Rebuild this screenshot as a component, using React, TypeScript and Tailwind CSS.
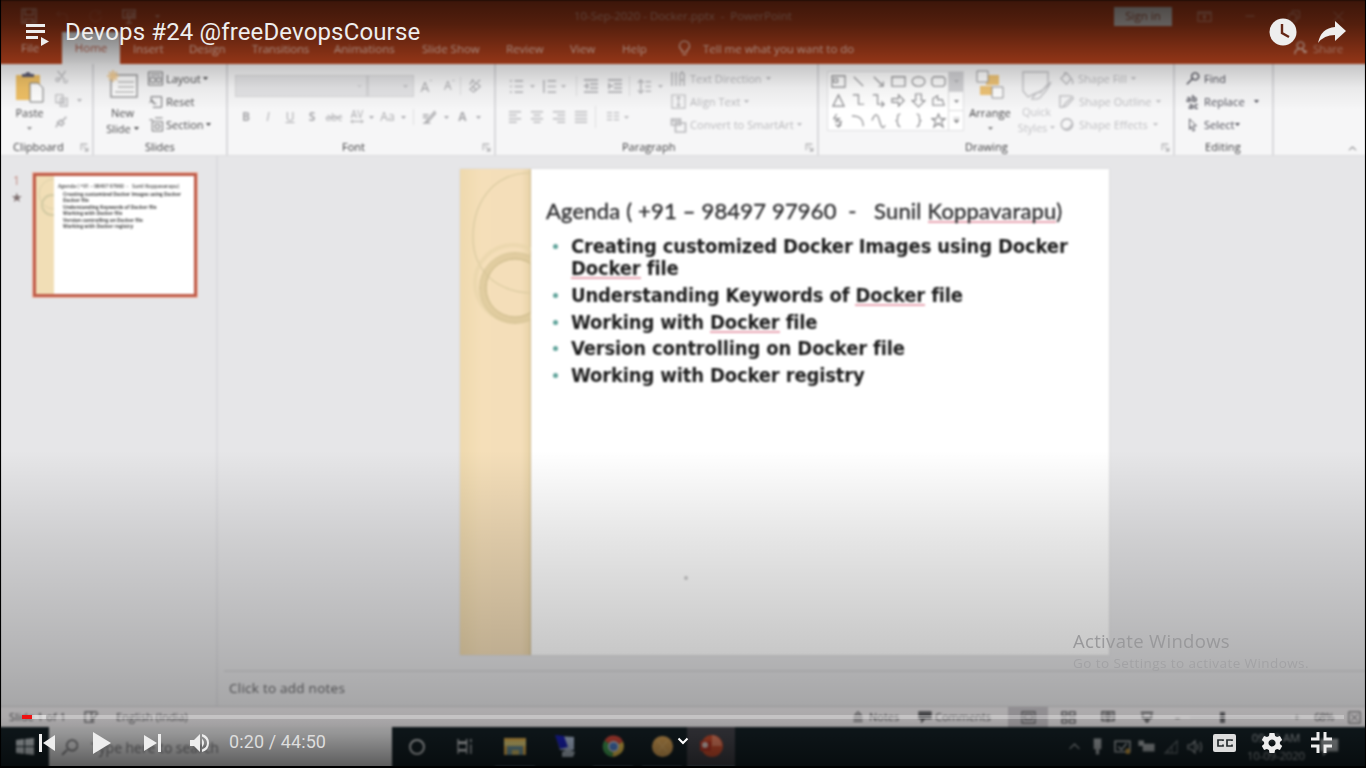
import React from "react";

type Kids = { className?: string; children?: React.ReactNode };

function Cell({ className = "w-[22px]", children }: Kids) {
  return <span className={`flex shrink-0 items-center justify-center ${className}`}>{children}</span>;
}

function Ico({ className = "size-4", d, fill = "none", sw = 1.2, box = "0 0 16 16" }: { className?: string; d: string; fill?: string; sw?: number; box?: string }) {
  return (
    <svg className={`shrink-0 ${className}`} viewBox={box} fill={fill} stroke="currentColor" strokeWidth={sw}>
      <path d={d} />
    </svg>
  );
}

function Caret({ className = "" }: { className?: string }) {
  return (
    <svg className={`h-[3px] w-[5px] shrink-0 ${className}`} viewBox="0 0 5 3">
      <path d="M0 0h5L2.5 3z" fill="currentColor" />
    </svg>
  );
}

function Group({ className = "", label, launcher, labelClass = "", children }: Kids & { label: string; launcher?: boolean; labelClass?: string }) {
  return (
    <section className={`flex shrink-0 flex-col border-r-2 border-[#d9d9db] ${className}`}>
      <div className="flex h-[71px]">{children}</div>
      <div className="relative h-[20px] text-[11px] leading-[24px] font-medium text-[#3c3c3e]">
        <span className={`block whitespace-nowrap ${labelClass}`}>{label}</span>
        {launcher && <Ico className="absolute top-[8px] right-[3px] size-[9px] text-[#a8a8aa]" d="M2 13V2h11M6 6l8 8M14 8v6H8" sw={1.8} />}
      </div>
    </section>
  );
}

const tabs: [string, string, string][] = [
  ["Insert", "ml-[13px] w-[56px]", "tracking-[-0.1px]"],
  ["Design", "w-[63px]", ""],
  ["Transitions", "w-[82px]", "tracking-[-0.2px]"],
  ["Animations", "w-[88px]", ""],
  ["Slide Show", "w-[84px]", ""],
  ["Review", "w-[64px]", ""],
  ["View", "w-[52px]", ""],
  ["Help", "w-[54px]", ""],
];

function TitleBar() {
  return (
    <header className="h-[64px] shrink-0 bg-[#b8431d] text-[11.5px] text-[#f3c9b9]">
      <div className="flex h-[32px] items-center pl-[21px]">
        <div className="flex w-[553px] items-center gap-[18px] opacity-60">
          <Ico d="M1 1h14v14H1zM4 1v6h8V1M4 15v-4h8v4" sw={1.6} />
          <Ico className="size-[15px] opacity-30" d="M2 5h8q4 1 3 8M5 2L2 5l3 3" />
          <Ico className="size-[15px] opacity-30" d="M12 3a6 6 0 1 0 2 5M13 1v4H9" />
          <Ico d="M1 2h14M2 2v8h12V2M8 10v5M5 15h6M6 5h6v3H6z" sw={1.6} />
          <Caret />
        </div>
        <span className="w-[540px] tracking-[-0.03px] whitespace-pre opacity-70">10-Sep-2020 - Docker.pptx  -  PowerPoint</span>
        <span className="flex h-[19px] w-[58px] items-center justify-center bg-[#d9cfc9] text-[11.5px] text-[#98503a]">Sign in</span>
        <div className="ml-[25px] flex items-center gap-[31px] opacity-60">
          <Ico className="size-[15px]" d="M1 3h14v10H1zM1 5h14M8 12V7M6 9l2-2 2 2" />
          <Ico className="size-[14px]" d="M3 8h10" />
          <Ico className="size-[13px]" d="M1 5h9v9H1zM5 5V1h9v9h-4" />
          <Ico className="size-[13px]" d="M2 2l12 12M14 2L2 14" />
        </div>
      </div>
      <nav className="flex h-[32px] items-center whitespace-nowrap">
        <span className="w-[62px] pl-[21px]">File</span>
        <span className="flex h-[32px] w-[58px] items-center justify-center bg-[#f3f3f4] text-[#c0604a]">Home</span>
        {tabs.map(([t, w, k]) => (
          <span key={t} className={`shrink-0 pt-px ${w} ${k}`}>{t}</span>
        ))}
        <Ico className="ml-[2px] h-[17px] w-[13px]" box="0 0 13 17" d="M4 12V10Q1 8 1.500 5.500Q2.500 1 6.500 1Q11 1.500 11.500 5.500Q12 8 9 10v2zM4.500 14.500h4" />
        <span className="ml-[12px] w-[591px] pt-px">Tell me what you want to do</span>
        <Ico className="size-[14px]" d="M7 1a4 4 0 1 0 1 0zM1 15q0-6 6-6 5 0 6 5M10 12h5" sw={1.5} />
        <span className="ml-[5px] pt-px tracking-[-0.2px] opacity-70">Share</span>
      </nav>
    </header>
  );
}

const shapes = [
  "M1 2h14v12H1zM3 5h4v4H3z", "M3 3l10 10", "M3 3l9 9M13 8v5H8", "M1 3h14v10H1z", "M8 3c9 0 9 10 0 10S-1 3 8 3z", "M3 3h10l2 2v6l-2 2H3l-2-2V5z",
  "M8 2l6 12H2z", "M2 2h6v10h6", "M2 2h5v10h6M11 9l3 3-3 3", "M1 6h7V2l6 6-6 6v-4H1z", "M5 1h6v7h4l-7 7-7-7h4z", "M2 13V6l5-3v4h5l2 6z",
  "M6 1L3 6h6L5 9h6l-3 5M5 12l3 3 3-3", "M1 3q12 0 12 11", "M1 8q5-12 8 0t6 5", "M10 1Q7 1 7 5T5 8q2 0 2 3t3 4", "M6 1q3 0 3 4t2 3q-2 0-2 3t-3 4", "M8 1l2 5h5l-4 3 2 6-5-4-5 4 2-6-4-3h5z",
];

function Ribbon() {
  return (
    <div className="flex h-[92px] shrink-0 border-b border-[#dcdcde] bg-[#f6f6f7] text-[11px] font-medium text-[#4a4a4c]">
      <Group className="w-[94px]" label="Clipboard" launcher labelClass="pl-[13px] tracking-[0.1px]">
        <div className="flex w-[42px] flex-col items-center pt-[7px] pl-[17px] whitespace-nowrap">
          <svg className="h-[32px] w-[30px] shrink-0" viewBox="0 0 30 32">
            <path d="M1 4h24v25H1z" fill="#efc065" />
            <path d="M7 6V3h3q3-4 6 0h3v3z" fill="#5a5a70" />
            <path d="M15 12h8l5 5v14H15z" fill="#fff" stroke="#777" />
          </svg>
          <span className="leading-[20px]">Paste</span>
          <Caret className="mt-[4px] opacity-60" />
        </div>
        <div className="ml-[13px] flex w-[34px] flex-col items-start gap-[9px] pt-[6px] text-[#b2b2b5]">
          <Ico className="size-[14px]" d="M3 1l8 10M12 1L5 11M5 11a2 2 0 1 0 0 .1M11 11a2 2 0 1 0 2 0" />
          <span className="flex items-center gap-[8px]"><Ico className="size-[14px]" d="M1 2h8v9H1zM6 6h8v9H6zM8 9h4M8 12h4" /><Caret /></span>
          <Ico className="size-[13px]" d="M14 1L9 6M7 5l4 4-3 3-5-4zM4 9l-3 5" sw={2} />
        </div>
      </Group>
      <Group className="w-[134px]" label="Slides" labelClass="pl-[51px]">
        <div className="flex w-[53px] flex-col items-center pt-[6px] pl-[4px]">
          <svg className="h-[30px] w-[32px] shrink-0" viewBox="0 0 32 30">
            <path d="M4 5h26v22H4z" fill="#fff" stroke="#9a9a9c" strokeWidth="1.500" />
            <path d="M11 12h16M11 17h16M8 22h19" stroke="#bbb" strokeWidth="1.500" />
            <path d="M6 0v12M0 6h12M2 2l8 8M10 2l-8 8" stroke="#f4d09a" strokeWidth="2" />
          </svg>
          <span className="mt-[5px] leading-[16px]">New</span>
          <span className="flex items-center gap-[3px] leading-[15px]">Slide<Caret /></span>
        </div>
        <div className="flex flex-col pt-[3px] leading-[23px] whitespace-nowrap">
          <span className="flex items-center gap-[2px]"><Ico className="h-[15px] w-[17px]" box="0 0 17 16" d="M1 1h15v14H1zM3 4h11M3 7h5v5H3zM10 7h4v5h-4z" sw={0.8} />Layout<Caret /></span>
          <span className="flex items-center gap-[2px]"><Ico className="h-[14px] w-[17px]" d="M3 7V2h12v12H5M1 9l3-3 3 3M4 6q0 5 5 4" sw={0.9} />Reset</span>
          <span className="flex items-center gap-[2px] pl-[1px]"><Ico className="h-[15px] w-[16px]" d="M4 5h11v10H4zM7 1h8M1 3h4M7 8h5v4H7z" sw={0.8} />Section<Caret /></span>
        </div>
      </Group>
      <Group className="w-[268px]" label="Font" launcher labelClass="pl-[114px]">
        <div className="flex flex-col pl-[7px] text-[#aaaaad]">
          <div className="flex h-[44px] items-center">
            <span className="flex h-[22px] w-[132px] items-center justify-end border border-[#d6d6d8] bg-[#e5e5e7] pr-1"><Caret className="opacity-30" /></span>
            <span className="flex h-[22px] w-[47px] items-center justify-end border border-l-2 border-[#d6d6d8] bg-[#e5e5e7] pr-[5px]"><Caret className="opacity-60" /></span>
            <Cell className="w-[25px] text-[14px]">A<sup className="text-[8px]">ˆ</sup></Cell>
            <Cell className="w-[22px] border-r border-[#dddddf] text-[12px]">A<sup className="text-[8px]">ˇ</sup></Cell>
            <Cell className="w-[28px]"><Ico className="size-[15px]" d="M2 11L9 4l4 4-7 6zM5 8l4 4M2 6l3-5 2 3M10 3l3-2" /></Cell>
          </div>
          <div className="flex h-[18px] items-center text-[12px]">
            <Cell><b>B</b></Cell><Cell><i>I</i></Cell><Cell><u>U</u></Cell><Cell><b>S</b></Cell>
            <Cell><s className="text-[10px]">abc</s></Cell>
            <Cell className="w-[24px] flex-col text-[10px] leading-[9px]"><span>AV</span><Ico className="h-[5px] w-[14px]" box="0 0 14 5" d="M1 2.500h12M3 .5l-2 2 2 2M11 .5l2 2-2 2" sw={1} /></Cell>
            <Caret /><Cell className="w-[27px]">Aa</Cell><Caret />
            <span className="ml-[7px] h-[16px] w-px bg-[#dddddf]" />
            <Cell className="w-[30px]"><Ico className="size-[15px]" d="M1 5h6M1 8h5M14 1L6 10l-3 4 4-2 8-9M1 14h8" sw={1.5} /></Cell>
            <Caret /><Cell className="w-[27px] font-bold">A</Cell><Caret />
          </div>
        </div>
      </Group>
      <Group className="w-[323px]" label="Paragraph" launcher labelClass="pl-[126px]">
        <div className="flex w-[174px] flex-col pl-[8px] text-[#bbbbbe]">
          <div className="flex h-[44px] items-center">
            <Cell className="w-[24px]"><Ico className="size-[15px]" d="M1 2h2M1 8h2M1 14h2M6 2h9M6 8h9M6 14h9" sw={1.8} /></Cell><Caret className="ml-[2px]" />
            <Cell className="ml-[2px] w-[24px]"><Ico className="size-[15px]" d="M2 1v14M6 2h9M6 8h9M6 14h9" sw={1.8} /></Cell><Caret />
            <span className="ml-[10px] h-[20px] w-px bg-[#dddddf]" />
            <Cell className="ml-[2px] w-[24px]"><Ico d="M1 2h14M7 6h8M7 10h8M1 14h14M1 8h5M4 5v6" sw={2} /></Cell>
            <Cell className="w-[23px]"><Ico d="M1 2h14M7 6h8M7 10h8M1 14h14M1 8h5M2 5v6" sw={2} /></Cell>
            <span className="ml-[3px] h-[20px] w-px bg-[#dddddf]" />
            <Cell className="w-[28px]"><Ico className="size-[15px]" d="M4 1v14M1 4l3-3 3 3M1 12l3 3 3-3M9 3h6M9 8h6M9 13h6" sw={1.6} /></Cell><Caret />
          </div>
          <div className="flex h-[18px] items-center">
            <Cell><Ico className="size-[14px]" d="M1 2h14M1 6h9M1 10h14M1 14h9" sw={1.7} /></Cell>
            <Cell><Ico className="size-[14px]" d="M1 2h14M4 6h8M1 10h14M4 14h8" sw={1.7} /></Cell>
            <Cell><Ico className="size-[14px]" d="M1 2h14M6 6h9M1 10h14M6 14h9" sw={1.7} /></Cell>
            <Cell><Ico className="size-[14px]" d="M1 2h14M1 6h14M1 10h14M1 14h14" sw={1.7} /></Cell>
            <span className="ml-[3px] h-[22px] w-px bg-[#dddddf]" />
            <Cell className="ml-[5px] w-[23px]"><Ico className="size-[14px]" d="M1 3h6M1 7h6M1 11h6M9 3h6M9 7h6M9 11h6" sw={1.7} /></Cell><Caret />
          </div>
        </div>
        <div className="flex flex-col pt-[3px] leading-[23px] whitespace-nowrap text-[#b9b9bc]">
          <span className="flex items-center gap-[4px]"><Ico className="size-[16px]" d="M2 1v14M6 1v14M10 15V3l2-2 2 2v12M10 9h4" sw={1.5} />Text Direction<Caret /></span>
          <span className="flex items-center gap-[3px] tracking-[0.05px]"><Ico className="h-[15px] w-[17px]" d="M1 1h14v14H1zM8 3v10M6 5l2-2 2 2M6 11l2 2 2-2" />Align Text<Caret /></span>
          <span className="flex items-center gap-[3px] tracking-[0.05px]"><Ico className="h-[16px] w-[17px]" d="M1 2h9v6H1zM5 6h10v9H5zM1 4h9" sw={1.7} />Convert to SmartArt<Caret /></span>
        </div>
      </Group>
      <Group className="w-[356px]" label="Drawing" launcher labelClass="pl-[146px]">
        <div className="mt-[7px] ml-[8px] flex h-[60px] w-[137px] border border-[#e0e0e2] bg-white text-[#88888b]">
          <div className="grid w-[121px] grid-cols-6 grid-rows-3 place-items-center">
            {shapes.map((d, i) => <Ico key={i} className="size-[15px]" d={d} sw={1.2} />)}
          </div>
          <div className="flex w-[15px] flex-col border-l border-[#dadadc]">
            <span className="flex flex-1 items-center justify-center bg-[#d2d2d5]"><Caret className="opacity-40" /></span>
            <span className="flex flex-1 items-center justify-center border-y border-[#dadadc]"><Caret /></span>
            <span className="flex flex-1 items-center justify-center"><Ico className="size-[7px]" d="M1 2h14M2 7h12l-6 7z" fill="currentColor" /></span>
          </div>
        </div>
        <div className="flex w-[52px] flex-col items-center pt-[6px]">
          <svg className="h-[30px] w-[28px] shrink-0" viewBox="0 0 28 30">
            <path d="M10 5h13v10H10zM4 16h12v9H4z" fill="#efc476" />
            <path d="M1 1h11v11H1zM16 17h11v11H16z" fill="#fff" stroke="#959598" />
          </svg>
          <span className="mt-[4px] leading-[18px] tracking-[0.1px] text-[#3f3f41]">Arrange</span>
          <Caret className="mt-[5px] opacity-70" />
        </div>
        <div className="flex w-[41px] flex-col items-center pt-[7px] text-[#c2c2c5]">
          <Ico className="h-[30px] w-[30px]" box="0 0 30 30" d="M1 1h25v12l-7 8-5 1-8 4-5-6zM29 11q-7 8-12 10-4 1-7 7 8 1 10-4 4-3 9-13z" sw={1.4} />
          <span className="mt-[3px] leading-[16px]">Quick</span>
          <span className="flex items-center gap-[3px] leading-[15px]">Styles<Caret /></span>
        </div>
        <div className="ml-[2px] flex flex-col pt-[3px] leading-[23px] whitespace-nowrap text-[#bebec1]">
          <span className="flex items-center gap-[4px]"><Ico className="size-[15px]" d="M2 8l6-6 5 6-5 6zM6 5V1M13 8q3 4 1 6" sw={1.5} />Shape Fill<Caret /></span>
          <span className="flex items-center gap-[5px]"><Ico className="size-[15px]" d="M13 2H1v12h3M15 2L6 11l-2 3 4-1 8-9" sw={1.5} />Shape Outline<Caret /></span>
          <span className="flex items-center gap-[5px]"><Ico className="size-[15px]" d="M8 2a6 6 0 1 0 1 0zM4 12q7 3 10-5" sw={1.8} />Shape Effects<Caret /></span>
        </div>
      </Group>
      <Group className="w-[99px]" label="Editing" labelClass="pl-[30px] tracking-[0.1px]">
        <div className="flex flex-col pt-[3px] pl-[11px] leading-[23px] whitespace-nowrap text-[#4b4b55]">
          <span className="flex items-center gap-[4px]"><Ico className="size-[14px]" d="M10 1a4 4 0 1 0 1 0zM7 8l-6 6" sw={1.5} />Find</span>
          <span className="flex items-center gap-[4px]"><span className="w-[14px] text-[9px] leading-[7px] font-bold">ab<br />&nbsp;ac</span><span className="tracking-[0.1px]">Replace</span><Caret className="ml-[5px]" /></span>
          <span className="flex items-center gap-[4px]"><Ico className="size-[14px]" d="M4 1l8 8H8l2 5-2 1-2-5-2 3z" sw={1} />Select<Caret className="-ml-[3px]" /></span>
        </div>
      </Group>
      <div className="flex flex-1 items-end justify-end pr-[9px] pb-[2px]"><Ico className="size-[9px]" d="M2 11l6-6 6 6" sw={1.6} /></div>
    </div>
  );
}

function Typo({ children }: Kids) {
  return <span className="bg-[linear-gradient(#e9a6b3,#e9a6b3)] bg-[length:100%_2px] bg-[position:0_94%] bg-no-repeat">{children}</span>;
}

function Thumbnail() {
  return (
    <div className="flex h-[124px] w-[164px] overflow-hidden border-[3px] border-[#bf5b48] bg-white outline outline-[#f3c2b2]">
      <div className="w-[18px] shrink-0 overflow-hidden bg-[#f1deb6]">
        <svg className="h-[50px] w-[18px]" viewBox="0 0 18 50" fill="none" stroke="#d3caa3"><circle cx="18" cy="18" r="15" strokeWidth=".7" /><circle cx="16" cy="29" r="10" strokeWidth="2" /></svg>
      </div>
      <div className="flex flex-col pt-[7px] pl-[4px] text-[5px] font-bold whitespace-pre text-[#444]">
        <span className="mb-[2px] leading-[7px] font-semibold">Agenda ( +91 – 98497 97960  -   Sunil Koppavarapu)</span>
        <ul className="pl-[5px] text-[4.800px] leading-[6.400px]">
          <li className="leading-[5.500px]">Creating customized Docker Images using Docker<br />Docker file</li>
          <li className="pt-px">Understanding Keywords of Docker file</li>
          <li>Working with Docker file</li>
          <li>Version controlling on Docker file</li>
          <li>Working with Docker registry</li>
        </ul>
      </div>
    </div>
  );
}

function Bullet({ className = "", children }: Kids) {
  return (
    <li className={`flex ${className}`}>
      <span className="mt-[9px] mr-[13px] size-[5px] shrink-0 rounded-full bg-[#5fa39a]" />
      <span>{children}</span>
    </li>
  );
}

function Slide() {
  return (
    <div className="mt-[13px] ml-[242px] flex h-[486px] w-[649px] bg-white shadow-[0_0_2px_#cfcfd2]">
      <div className="w-[71px] shrink-0 border-r border-[#cdbb91] bg-[linear-gradient(90deg,#eed9ae,#f5dfb9_30%,#f4deb9_88%,#e8d3a8)]">
        <svg className="h-[170px] w-[71px]" viewBox="0 0 71 170" fill="none">
          <path d="M70 4C32 4 13 35 13 68s22 54 57 56" stroke="#d9caa0" strokeWidth="1.200" />
          <circle cx="53" cy="114" r="38" stroke="#e6d4a9" strokeWidth="4" opacity=".6" />
          <circle cx="55" cy="119" r="32" stroke="#d8c496" strokeWidth="6" opacity=".7" />
          <circle cx="55" cy="119" r="29" stroke="#c9b888" strokeWidth="1" />
          <circle cx="55" cy="119" r="35.500" stroke="#cfbf90" strokeWidth="1" opacity=".8" />
        </svg>
      </div>
      <div className="flex flex-1 flex-col pt-[27px] pl-[15px] text-[#1c1c1c]">
        <h1 className="h-[39px] font-['Lato'] text-[22px] leading-[30px] tracking-[0.18px] whitespace-pre text-[#2c2c2e] [-webkit-text-stroke:0.35px_#2c2c2e]">Agenda ( +91 – 98497 97960  -   Sunil <Typo>Koppavarapu</Typo>)</h1>
        <ul className="flex flex-col pl-[7px] font-['DejaVu_Sans_Condensed','DejaVu_Sans'] text-[20px] leading-[22px] font-bold tracking-[-0.15px] whitespace-nowrap [font-stretch:condensed]">
          <Bullet className="h-[49px]">Creating customized Docker Images using Docker<br /><Typo>Docker</Typo> file</Bullet>
          <Bullet className="h-[27px]">Understanding Keywords of <Typo>Docker</Typo> file</Bullet>
          <Bullet className="h-[26px]">Working with <Typo>Docker</Typo> file</Bullet>
          <Bullet className="h-[27px]">Version controlling on Docker file</Bullet>
          <Bullet className="h-[27px]">Working with Docker registry</Bullet>
        </ul>
        <span className="mt-[185px] ml-[138px] size-[4px] rounded-full bg-[#c9c9cb]" />
      </div>
    </div>
  );
}

function StatusBar() {
  return (
    <div className="flex h-[21px] shrink-0 items-center border-t border-[#cfcfd2] bg-[#f1eef0] pl-[9px] text-[11px] whitespace-nowrap text-[#626265]">
      <span className="w-[75px] tracking-[0.1px]">Slide 1 of 1</span>
      <span className="w-[32px]"><Ico className="size-[15px]" d="M1 2h7v11H1zM8 2h6M8 13h3M10 9l5-6M10 9v3" /></span>
      <span className="w-[736px] tracking-[0.05px]">English (India)</span>
      <span className="flex w-[66px] items-center gap-[5px]"><Ico className="size-[12px]" d="M4 5l4-4 4 4zM2 8h12M2 11h12M2 14h12" sw={1.4} />Notes</span>
      <span className="flex w-[90px] items-center gap-[3px]"><Ico className="size-[14px]" fill="currentColor" d="M1 2h14v8H8l-4 4v-4H1z" />Comments</span>
      <span className="flex h-full w-[40px] items-center justify-center bg-[#cac6cb]"><Ico className="size-[15px]" d="M1 2h14v12H1zM4 5h8v5H4z" /></span>
      <Cell className="w-[40px]"><Ico className="size-[15px]" d="M1 2h5v4H1zM9 2h6v4H9zM1 10h5v4H1zM9 10h6v4H9z" sw={1.4} /></Cell>
      <Cell className="w-[39px]"><Ico className="size-[14px]" d="M1 2h14v10H1zM8 2v12M3 5h4M9 5h4M3 8h4M9 8h4" sw={1.5} /></Cell>
      <Cell className="w-[40px]"><Ico className="size-[14px]" d="M1 3h14M3 5v4h10V5M8 9v5M5 11l3 3 3-3" sw={1.8} /></Cell>
      <Cell className="w-[21px]">–</Cell>
      <span className="ml-[2px] flex h-px w-[102px] items-center bg-[#cfcdd2] pl-[30px]"><span className="h-[11px] w-[5px] bg-[#6d6d71]" /></span>
      <Cell className="w-[10px]">+</Cell>
      <span className="ml-[12px] w-[34px] tracking-[-0.7px]">68%</span>
      <Ico className="size-[13px]" d="M1 1h14v14H1zM4 4l8 8M12 4l-8 8" />
    </div>
  );
}

function TaskBar() {
  return (
    <div className="flex h-[41px] shrink-0 bg-[#142025] text-[#d3d6d9]">
      <Cell className="w-[49px] pb-[3px]"><svg className="size-[18px]" viewBox="0 0 18 18" fill="#c2c9cd"><path d="M0 3l8-1v7H0zM9 2l9-1v8H9zM0 10h8v7l-8-1zM9 10h9v8l-9-1z" /></svg></Cell>
      <div className="flex w-[343px] items-center bg-[#eaeaeb] pb-px pl-[12px] text-[14px] tracking-[-0.05px] text-[#77777a]">
        <Ico className="mr-[13px] size-[17px]" d="M10 1a5 5 0 1 0 1 0zM6 10l-5 5" sw={1.6} />
        Type here to search
      </div>
      <Cell className="w-[50px] pb-[2px]"><span className="size-[16px] rounded-full border-[2.5px] border-[#c4c8ca]" /></Cell>
      <Cell className="w-[45px] pb-[3px]"><Ico className="size-[17px]" d="M2 1v3h8V1M2 5h8v6H2zM2 15v-3h8v3M14 1v3M14 6v9" sw={1.2} /></Cell>
      <div className="flex [&>span]:border-b-2 [&>span]:pb-[1px]">
        <Cell className="ml-[8px] w-[40px] border-[#5b7387]"><svg className="h-[20px] w-[23px]" viewBox="0 0 23 20"><path d="M0 2h22v17H0z" fill="#e7b550" /><path d="M0 5h22v5H0z" fill="#e5d37c" /><path d="M3 10h16v9H3z" fill="#71979f" /><path d="M8 14h7v5H8z" fill="#d2bd6a" /></svg></Cell>
        <Cell className="ml-[8px] w-[44px] border-transparent"><svg className="size-[24px]" viewBox="0 0 24 24"><path d="M3 2l18 1v13H7z" fill="#b4c5df" /><path d="M2 1l9 1 4 11-8 2z" fill="#1b23bd" /><path d="M9 18l6-3 7 3-2 5H9z" fill="#aab7c2" /></svg></Cell>
        <Cell className="ml-[6px] w-[40px] border-[#5b7387]"><svg className="size-[23px]" viewBox="0 0 24 24"><path d="M12 12L2.500 6A11 11 0 0 1 22 7z" fill="#d94b3c" /><path d="M12 12l-1 11A11 11 0 0 1 2.500 6z" fill="#43a154" /><path d="M12 12l10-5q4 13-11 16z" fill="#edc54e" /><circle cx="12" cy="12" r="5" fill="#4f84d3" stroke="#d8d9dd" strokeWidth="1.500" /></svg></Cell>
        <Cell className="ml-[9px] w-[40px] border-[#5b7387]"><svg className="size-[23px]" viewBox="0 0 24 24"><circle cx="12" cy="12" r="11" fill="#dda657" /><path d="M7 6l10 12M17 6L7 18" stroke="#efc27c" /></svg></Cell>
        <Cell className="ml-[5px] w-[48px] border-[#6d8497] bg-[#43434a]"><svg className="size-[24px]" viewBox="0 0 24 24"><circle cx="13" cy="12" r="11" fill="#d45130" /><path d="M13 1a11 11 0 0 1 10 11H13z" fill="#ee8464" /><path d="M1 7h11v10H1z" fill="#bd3927" /><circle cx="6" cy="11" r="3" fill="#e9d4ce" /></svg></Cell>
      </div>
      <div className="ml-[329px] flex items-center pb-[2px] text-[#a3a9ac]">
        <Cell className="w-[20px]"><Ico className="size-[13px]" d="M2 11l6-6 6 6" sw={1.5} /></Cell>
        <Cell className="w-[26px]"><Ico className="size-[17px]" fill="currentColor" d="M5 1h6v9H5zM7 10v5h2v-5" /></Cell>
        <Cell className="w-[24px]"><svg className="size-[17px]" viewBox="0 0 16 16"><path d="M1 3h14v10H1zM4 8l3 3 5-6" fill="none" stroke="currentColor" strokeWidth="1.500" /><path d="M11 10h4v5h-4z" fill="#c79a3e" /></svg></Cell>
        <Cell className="w-[25px]"><Ico className="size-[17px]" fill="currentColor" d="M5 6h10v6H5zM1 3h4v4H1z" /></Cell>
        <Cell className="w-[24px]"><Ico className="size-[14px] opacity-60" d="M1 15L15 1v14zM5 15v-4M9 15V7" /></Cell>
        <Cell className="w-[23px]"><Ico d="M1 6h3l4-4v12l-4-4H1zM10 5q2 3 0 6M13 3q3 5 0 10" /></Cell>
        <span className="ml-[39px] flex w-[62px] flex-col items-center text-[11.500px] leading-[18px] tracking-[-0.2px]"><span>09:12 AM</span><span>10-09-2020</span></span>
        <Cell className="w-[34px] pl-[12px]"><Ico className="size-[20px]" fill="currentColor" d="M1 2h13v9H6l-3 3v-3H1z" /></Cell>
      </div>
    </div>
  );
}

function Player() {
  return (
    <div className="absolute inset-0 flex flex-col justify-between font-['Roboto',sans-serif] text-[#eeeeee]">
      <div className="flex h-[64px] items-center pl-[25px]">
        <svg className="mt-[5px] h-[24px] w-[25px]" viewBox="0 0 25 24" fill="currentColor"><path d="M1 1h19v3H1zM1 7h19v3H1zM1 13h12v3H1zM16 14l8 4.500-8 4.500z" /></svg>
        <span className="ml-[15px] flex-1 text-[24px] leading-[28px] tracking-[0.14px] whitespace-nowrap">Devops #24 @freeDevopsCourse</span>
        <svg className="size-[28px]" viewBox="0 0 28 28"><circle cx="14" cy="14" r="13.500" fill="#eee" /><path d="M13 6v9l7 4" stroke="#652716" strokeWidth="2.400" fill="none" /></svg>
        <svg className="mr-[20px] ml-[21px] h-[23px] w-[28px]" viewBox="0 0 28 23" fill="#eee"><path d="M17 0l11 10-11 10v-6Q6 14 0 22 3 7 17 6z" /></svg>
      </div>
      <div>
        <div className="mx-[22px] flex h-[4px] bg-white/30"><span className="w-[10px] bg-[#ee1111]" /><span className="w-[14px] bg-white/40" /></div>
        <div className="relative flex h-[49px] items-center pb-[2px] pl-[38px]">
          <svg className="h-[18px] w-[18px]" viewBox="0 0 18 18" fill="#eee"><path d="M1 0h3v18H1zM17 1v16L5 9z" /></svg>
          <svg className="ml-[37px] h-[22px] w-[18px]" viewBox="0 0 18 22" fill="#eee"><path d="M0 0l18 11L0 22z" /></svg>
          <svg className="ml-[33px] h-[18px] w-[18px]" viewBox="0 0 18 18" fill="#eee"><path d="M14 0h3v18h-3zM0 1v16l13-8z" /></svg>
          <svg className="ml-[27px] h-[20px] w-[21px]" viewBox="0 0 21 20" fill="#eee"><path d="M1 7h4l6-6v18l-6-6H1zM13 5.500q4 4.500 0 9zM13 1q7 2 7 9t-7 9v-2.500q5-2 5-6.500t-5-6.500z" /></svg>
          <span className="mb-[3px] ml-[19px] text-[18px] tracking-[0.1px] text-[#dddddd]">0:20 / 44:50</span>
          <div className="ml-auto flex items-center pr-[34px]">
            <svg className="h-[18px] w-[23px]" viewBox="0 0 23 18"><rect width="23" height="18" rx="2" fill="#ddd" /><path d="M10 7V6H5v6h5v-1.500M19 7V6h-5v6h5v-1.500" fill="none" stroke="#252b2d" strokeWidth="1.700" /></svg>
            <svg className="ml-[25px] size-[22px]" viewBox="0 0 22 22"><path fillRule="evenodd" fill="#eee" d="M8.500 1h5l.6 3 2 1 2.800-1 2.300 4-2.300 2v2l2.300 2-2.300 4-2.800-1-2 1-.6 3h-5l-.6-3-2-1-2.800 1L.8 14l2.300-2v-2L.8 8l2.300-4L6 5l2-1zM11 7.500a3.500 3.500 0 1 0 .1 0z" /></svg>
            <svg className="ml-[28px] size-[21px]" viewBox="0 0 21 21" stroke="#eee" strokeWidth="3" fill="none"><path d="M0 7h7V0M14 0v7h7M0 14h7v7M14 21v-7h7" /></svg>
          </div>
          <svg className="absolute top-[18px] left-[677px] h-[8px] w-[12px]" viewBox="0 0 12 8" fill="none" stroke="#fff" strokeWidth="2"><path d="M1.500 1.500L6 6l4.500-4.500" /></svg>
        </div>
      </div>
    </div>
  );
}

export default function App() {
  return (
    <div className="relative h-[768px] w-[1366px] overflow-hidden bg-black font-['Open_Sans','Noto_Sans',sans-serif]">
      <div className="flex h-[768px] w-[1366px] flex-col [filter:blur(0.9px)]">
        <TitleBar />
        <Ribbon />
        <main className="flex h-[550px] shrink-0 bg-[#e6e6e8]">
          <aside className="flex w-[218px] shrink-0 border-r-2 border-[#dcdcdf] pt-[17px]">
            <div className="flex w-[33px] flex-col items-center text-[12px] leading-[16px] text-[#c28b82]"><span>1</span><span className="text-[13px] text-[#7d6e6e]">★</span></div>
            <Thumbnail />
          </aside>
          <div className="flex flex-1 flex-col">
            <Slide />
            <div className="mt-[15px] ml-[6px] flex-1 border-t-2 border-[#d8d8da] pt-[7px] pl-[5px] text-[13.500px] leading-[19px] tracking-[0.25px] text-[#656568]">Click to add notes</div>
          </div>
        </main>
        <StatusBar />
        <TaskBar />
      </div>
      <div className="absolute top-[629px] left-[1073px] [filter:blur(0.4px)]">
        <p className="text-[18.500px] leading-[23px] tracking-[0.32px] text-[#c0c0c3]">Activate Windows</p>
        <p className="mt-px text-[13.500px] leading-[20px] tracking-[0.42px] text-[#d2d2d5]">Go to Settings to activate Windows.</p>
      </div>
      <div className="absolute inset-x-0 top-0 h-[110px] bg-[linear-gradient(rgba(0,0,0,.68),rgba(0,0,0,.55)_22%,rgba(0,0,0,.2)_58%,rgba(0,0,0,.05)_80%,transparent)]" />
      <div className="absolute inset-x-0 bottom-0 h-[318px] bg-[linear-gradient(transparent,rgba(0,0,0,.1)_28%,rgba(0,0,0,.22)_65%,rgba(0,0,0,.29)_84%,rgba(0,0,0,.36)_89%,rgba(0,0,0,.62))]" />
      <Player />
      <div className="pointer-events-none absolute inset-0 border-x border-b-2 border-black" />
    </div>
  );
}
